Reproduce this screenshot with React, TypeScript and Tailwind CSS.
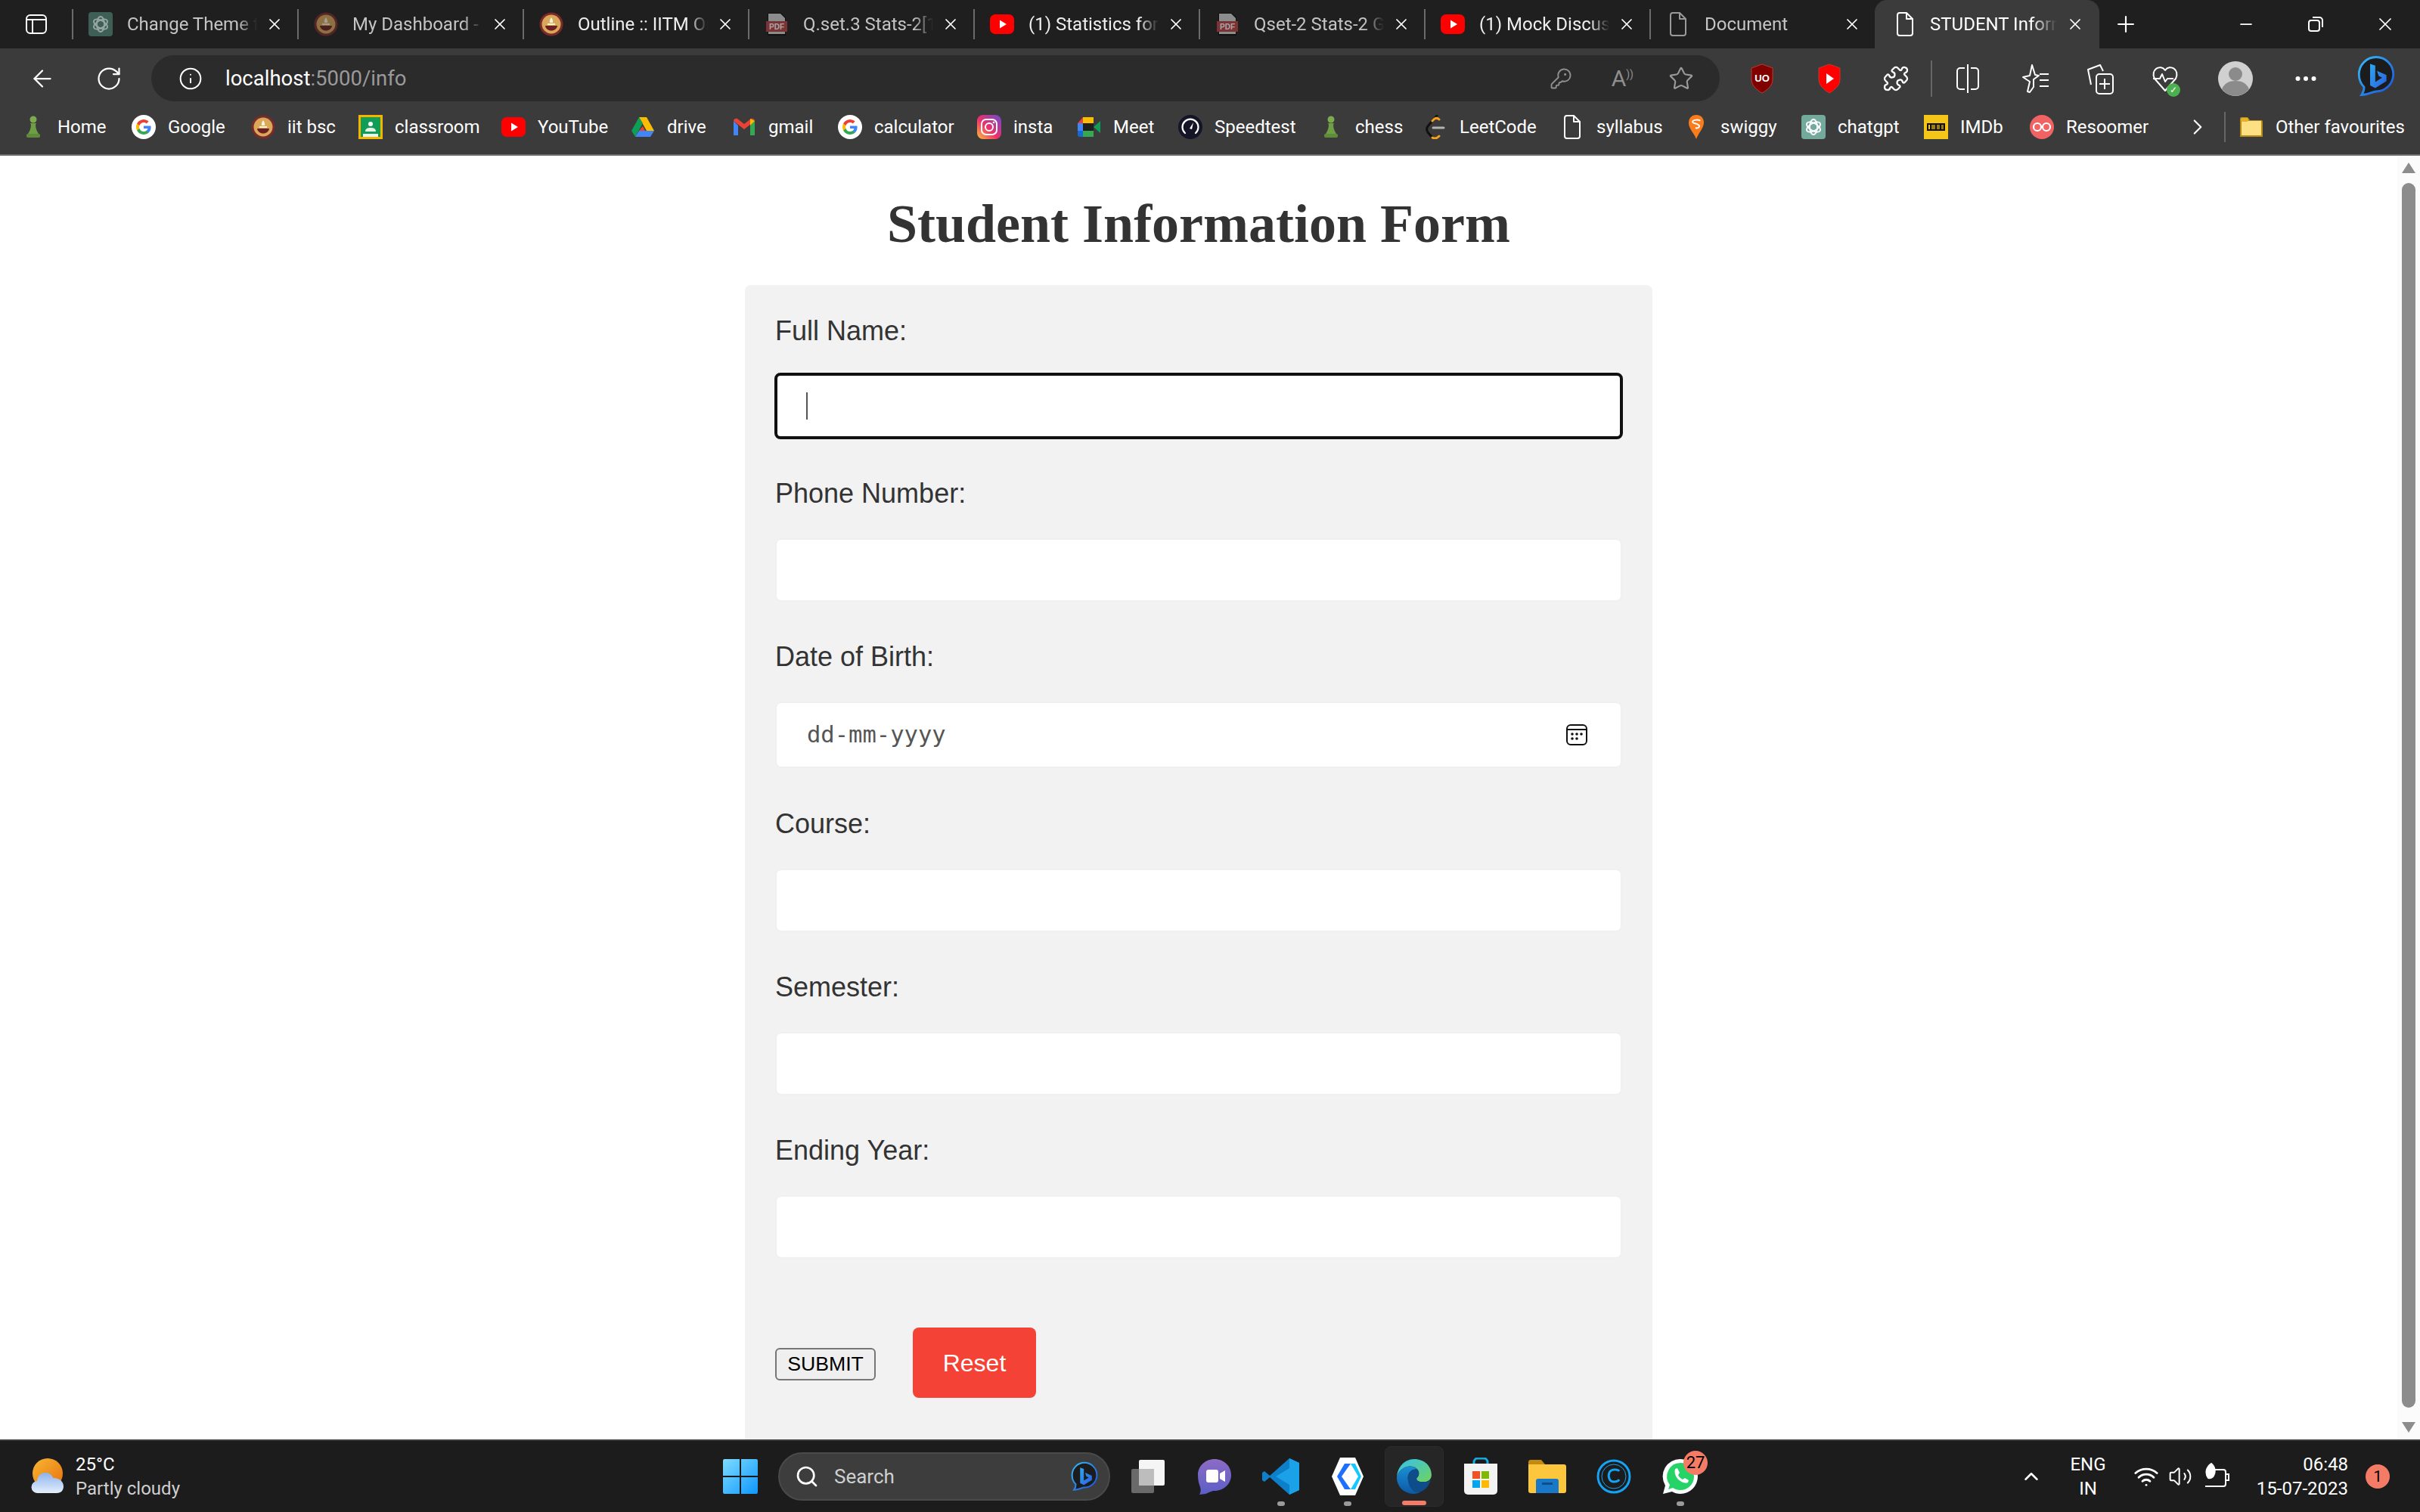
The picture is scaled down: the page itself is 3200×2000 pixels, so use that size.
import React from 'react';
import { ArrowLeft, RotateCw, Info, KeyRound, Star, Puzzle, Plus, Minus, X, ChevronRight, ChevronUp, Search, Wifi, Volume2, MoreHorizontal } from 'lucide-react';

const uiFont = "font-['Roboto','Noto_Sans',sans-serif]";

// ---- logos ----
const Pawn = () => (
  <svg width="32" height="32" viewBox="0 0 32 32">
    <circle cx="16" cy="6" r="4.5" fill="#7cab4f" />
    <path d="M12 11h8l-1 2c0 5 2 9 4 12H9c2-3 4-7 4-12z" fill="#6f9e45" />
    <rect x="7" y="25" width="18" height="5" rx="2" fill="#5f8c3a" />
  </svg>
);
const GoogleG = () => (
  <svg width="32" height="32" viewBox="0 0 32 32">
    <circle cx="16" cy="16" r="16" fill="#fff" />
    <path d="M25.6 16.3c0-.7-.1-1.3-.2-1.9H16v3.7h5.4a4.6 4.6 0 0 1-2 3v2.5h3.2c1.9-1.7 3-4.300 3-7.300z" fill="#4285f4" />
    <path d="M16 26c2.700 0 5-.9 6.600-2.400l-3.200-2.500c-.9.6-2 1-3.400 1-2.600 0-4.800-1.800-5.600-4.100H7.100v2.600A10 10 0 0 0 16 26z" fill="#34a853" />
    <path d="M10.400 18a6 6 0 0 1 0-3.900v-2.600H7.100a10 10 0 0 0 0 9.100z" fill="#fbbc05" />
    <path d="M16 9.900c1.500 0 2.800.5 3.800 1.500l2.800-2.800A10 10 0 0 0 7.100 11.500l3.300 2.600c.8-2.400 3-4.200 5.600-4.200z" fill="#ea4335" />
  </svg>
);
const Seal = () => (
  <svg width="32" height="32" viewBox="0 0 32 32">
    <circle cx="16" cy="16" r="15.500" fill="#7b2a2a" />
    <circle cx="16" cy="16" r="12.500" fill="#d9a85a" />
    <path d="M8 18h16c-.5 4-4 6.500-8 6.500S8.500 22 8 18z" fill="#6e1f1f" />
    <path d="M16 7c2 3 2.500 5 2 7h-4c-.5-2 0-4 2-7z" fill="#fff3d6" />
    <rect x="11" y="15" width="10" height="2" fill="#fff3d6" />
  </svg>
);
const Classroom = () => (
  <svg width="32" height="32" viewBox="0 0 32 32">
    <rect width="32" height="32" fill="#f4b400" />
    <rect x="3" y="3" width="26" height="26" fill="#0f9d58" />
    <circle cx="16" cy="12" r="3" fill="#fff" />
    <path d="M9 22c0-4 3-5 7-5s7 1 7 5z" fill="#e8f0e8" />
    <rect x="6" y="25" width="20" height="4" fill="#fff" opacity="0.9" />
  </svg>
);
const YouTube = () => (
  <svg width="32" height="32" viewBox="0 0 32 32">
    <rect x="0" y="3" width="32" height="26" rx="7" fill="#ff0000" />
    <path d="M13 10.500 22 16l-9 5.500z" fill="#fff" />
  </svg>
);
const Drive = () => (
  <svg width="32" height="32" viewBox="0 0 32 32">
    <path d="M11 3h10l10 18H21z" fill="#fbbc04" />
    <path d="M11 3 1 21l5 8 10-18z" fill="#0f9d58" />
    <path d="M11 21h20l-5 8H6z" fill="#4285f4" />
    <path d="M11 21h8l-3-6z" fill="#ea4335" />
  </svg>
);
const Gmail = () => (
  <svg width="32" height="32" viewBox="0 0 32 32">
    <path d="M2 8v19h6V14z" fill="#4285f4" />
    <path d="M24 14v13h6V8z" fill="#34a853" />
    <path d="M2 8l14 11L30 8c0-3-3-4-5-3l-9 7-9-7C5 4 2 5 2 8z" fill="#ea4335" />
    <path d="M24 5l6 3-6 6z" fill="#fbbc04" />
  </svg>
);
const Instagram = () => (
  <svg width="32" height="32" viewBox="0 0 32 32">
    <defs>
      <linearGradient id="ig" x1="0" y1="1" x2="1" y2="0">
        <stop offset="0" stopColor="#fdc13a" />
        <stop offset="0.45" stopColor="#ef2f6a" />
        <stop offset="1" stopColor="#6a4bd0" />
      </linearGradient>
    </defs>
    <rect width="32" height="32" rx="8" fill="url(#ig)" />
    <rect x="6" y="6" width="20" height="20" rx="6" fill="none" stroke="#fff" strokeWidth="2" />
    <circle cx="16" cy="16" r="5" fill="none" stroke="#fff" strokeWidth="2" />
    <circle cx="22" cy="10" r="1.300" fill="#fff" />
  </svg>
);
const Meet = () => (
  <svg width="32" height="32" viewBox="0 0 32 32">
    <path d="M8 3h14v8H8z" fill="#fbbc04" />
    <path d="M8 3v8H1z" fill="#ea4335" />
    <path d="M1 11h7v10H1z" fill="#4285f4" />
    <path d="M1 21h7v8H4c-2 0-3-1-3-3z" fill="#1967d2" />
    <path d="M8 21h14v8H8z" fill="#34a853" />
    <path d="M8 11h14v10H8z" fill="#1f1f1f" />
    <path d="M22 16l9-8v16z" fill="#0f9d58" />
  </svg>
);
const Speedtest = () => (
  <svg width="32" height="32" viewBox="0 0 32 32">
    <circle cx="16" cy="16" r="16" fill="#141526" />
    <path d="M9 24a10.500 10.500 0 1 1 14 0" fill="none" stroke="#fff" strokeWidth="2.200" strokeLinecap="round" />
    <path d="M15 18l5-8-2 9z" fill="#fff" />
  </svg>
);
const LeetCode = () => (
  <svg width="32" height="32" viewBox="0 0 32 32">
    <path d="M18 1 6 15c-2 3-2 5 0 8l6 7" fill="none" stroke="#111" strokeWidth="3" strokeLinecap="round" />
    <path d="M12 30c3 2 6 1 9-2M12 8l3-3c2-1 4-1 6 1" fill="none" stroke="#f89f1b" strokeWidth="3" strokeLinecap="round" />
    <path d="M13 17h14" stroke="#b3b3b3" strokeWidth="3" strokeLinecap="round" />
  </svg>
);
const FileIcon = ({ color = '#fff' }: { color?: string }) => (
  <svg width="32" height="32" viewBox="0 0 32 32" fill="none" stroke={color} strokeWidth="2" strokeLinejoin="round">
    <path d="M6 4a3 3 0 0 1 3-3h9l8 8v19a3 3 0 0 1-3 3H9a3 3 0 0 1-3-3z" />
    <path d="M18 1v8h8" />
  </svg>
);
const Swiggy = () => (
  <svg width="32" height="32" viewBox="0 0 32 32">
    <path d="M16 0c6 0 10 4 10 10 0 7-7 14-10 22-3-8-10-14-10-21C6 4 10 0 16 0z" fill="#f97d1c" />
    <path d="M11 9c1-3 9-3 10-1M11 9c0 3 9 2 9 6 0 2-3 3-5 2" fill="none" stroke="#fff" strokeWidth="2" />
  </svg>
);
const ChatGpt = ({ dim }: { dim?: boolean }) => (
  <svg width="32" height="32" viewBox="0 0 32 32">
    <rect width="32" height="32" rx="4" fill={dim ? '#3e5f56' : '#74aa9c'} />
    <g fill="none" stroke={dim ? '#98a8a3' : '#fff'} strokeWidth="1.800">
      <ellipse cx="16" cy="16" rx="5" ry="10" />
      <ellipse cx="16" cy="16" rx="5" ry="10" transform="rotate(60 16 16)" />
      <ellipse cx="16" cy="16" rx="5" ry="10" transform="rotate(120 16 16)" />
    </g>
  </svg>
);
const Imdb = () => (
  <svg width="32" height="32" viewBox="0 0 32 32">
    <rect width="32" height="32" fill="#f5c518" />
    <rect x="4" y="11" width="24" height="10" fill="#111" />
    <rect x="6" y="13" width="2" height="6" fill="#f5c518" />
    <rect x="10" y="13" width="5" height="6" fill="#f5c518" opacity="0.6" />
    <rect x="17" y="13" width="4" height="6" fill="#f5c518" opacity="0.6" />
    <rect x="23" y="13" width="3" height="6" fill="#f5c518" opacity="0.6" />
  </svg>
);
const Resoomer = () => (
  <svg width="32" height="32" viewBox="0 0 32 32">
    <circle cx="16" cy="16" r="16" fill="#ef6363" />
    <circle cx="10" cy="16" r="5" fill="none" stroke="#fff" strokeWidth="2.200" />
    <circle cx="22" cy="16" r="5" fill="none" stroke="#fff" strokeWidth="2.200" />
  </svg>
);
const Folder = () => (
  <svg width="32" height="32" viewBox="0 0 32 32">
    <path d="M1 5a2 2 0 0 1 2-2h8l3 4h15a2 2 0 0 1 2 2v20H1z" fill="#b88a18" />
    <path d="M3 8h26v19H3z" fill="#fde082" />
    <rect x="2" y="4" width="10" height="5" rx="2" fill="#e5b12a" />
  </svg>
);
const PdfIcon = () => (
  <svg width="32" height="32" viewBox="0 0 32 32">
    <path d="M4 1h18l6 6v24H4z" fill="#111" />
    <path d="M5 2h16l6 6v21H5z" fill="#8c8c8c" />
    <rect x="2" y="12" width="28" height="14" fill="#7c3333" />
    <text x="16" y="23" textAnchor="middle" fontSize="10" fontWeight="700" fill="#a9a9a9" fontFamily="Liberation Sans, sans-serif">PDF</text>
  </svg>
);
const EdgeMark = ({ size = 32 }: { size?: number }) => (
  <svg width={size} height={size} viewBox="0 0 48 48">
    <defs>
      <linearGradient id="edgeA" x1="0" y1="0" x2="1" y2="1">
        <stop offset="0" stopColor="#35c1f1" />
        <stop offset="1" stopColor="#6fd35b" />
      </linearGradient>
      <linearGradient id="edgeB" x1="0" y1="0" x2="0" y2="1">
        <stop offset="0" stopColor="#1c8fd6" />
        <stop offset="1" stopColor="#0c59a4" />
      </linearGradient>
    </defs>
    <path d="M24 2c13 0 22 9 22 20 0 6-5 9-10 9-4 0-9-1-9-4 0-2 3-2 3-7 0-5-5-9-11-9-8 0-15 6-17 13C3 13 11 2 24 2z" fill="url(#edgeA)" />
    <path d="M2 24c2-7 9-13 17-13 4 0 7 2 9 4-7-1-12 4-12 11 0 8 6 16 16 18-3 1-5 2-9 2C11 46 1 36 2 24z" fill="url(#edgeB)" />
    <path d="M16 26c0-7 5-12 12-11 2 2 2 3 2 5 0 5-3 5-3 7 0 3 5 4 9 4 4 0 7-1 9-3-2 9-10 17-19 16C20 42 16 34 16 26z" fill="#0e4c8a" />
  </svg>
);
const BingMark = ({ size = 40 }: { size?: number }) => (
  <svg width={size} height={size * 1.1} viewBox="0 0 44 48">
    <defs>
      <linearGradient id="bingRing" x1="0" y1="0" x2="1" y2="1">
        <stop offset="0" stopColor="#37bdf8" />
        <stop offset="1" stopColor="#1b4fd8" />
      </linearGradient>
      <linearGradient id="bingB" x1="0" y1="0" x2="1" y2="1">
        <stop offset="0" stopColor="#2ea8ef" />
        <stop offset="1" stopColor="#2a5fe0" />
      </linearGradient>
    </defs>
    <path d="M22 2c11 0 20 9 20 20s-9 20-20 20c-4 0-9 4-17 4 3-4 3-7 3-9-4-4-6-9-6-15C2 11 11 2 22 2z" fill="#1c1c1c" stroke="url(#bingRing)" strokeWidth="2.500" />
    <path d="M15 10l6 2v19l8-5-4-2-2-6 11 5v7l-13 8-6-3z" fill="url(#bingB)" />
  </svg>
);
const Shield = ({ fill, children }: { fill: string; children: React.ReactNode }) => (
  <svg width="32" height="40" viewBox="0 0 32 40">
    <path d="M16 1 30 6v15c0 8-7 14-14 18C9 35 2 29 2 21V6z" fill={fill} stroke="#c0392b" strokeWidth="1" />
    {children}
  </svg>
);

// ---- data ----
const tabs = [
  { title: 'Change Theme for', icon: <ChatGpt dim />, tone: 'text-[#c4c4c4]' },
  { title: 'My Dashboard - IITM', icon: <span className="opacity-60"><Seal /></span>, tone: 'text-[#c4c4c4]' },
  { title: 'Outline :: IITM Online', icon: <Seal />, tone: 'text-[#eeeeee]' },
  { title: 'Q.set.3 Stats-2[1]', icon: <PdfIcon />, tone: 'text-[#c4c4c4]' },
  { title: '(1) Statistics for Data', icon: <YouTube />, tone: 'text-[#eeeeee]' },
  { title: 'Qset-2 Stats-2 Graded', icon: <PdfIcon />, tone: 'text-[#c4c4c4]' },
  { title: '(1) Mock Discussion', icon: <YouTube />, tone: 'text-[#eeeeee]' },
  { title: 'Document', icon: <FileIcon color="#9a9a9a" />, tone: 'text-[#c4c4c4]' },
];

const bookmarks = [
  { label: 'Home', w: 'w-[146px]', icon: <Pawn /> },
  { label: 'Google', w: 'w-[158px]', icon: <GoogleG /> },
  { label: 'iit bsc', w: 'w-[142px]', icon: <Seal /> },
  { label: 'classroom', w: 'w-[189px]', icon: <Classroom /> },
  { label: 'YouTube', w: 'w-[171px]', icon: <YouTube /> },
  { label: 'drive', w: 'w-[134px]', icon: <Drive /> },
  { label: 'gmail', w: 'w-[140px]', icon: <Gmail /> },
  { label: 'calculator', w: 'w-[184px]', icon: <GoogleG /> },
  { label: 'insta', w: 'w-[132px]', icon: <Instagram /> },
  { label: 'Meet', w: 'w-[134px]', icon: <Meet /> },
  { label: 'Speedtest', w: 'w-[186px]', icon: <Speedtest /> },
  { label: 'chess', w: 'w-[138px]', icon: <Pawn /> },
  { label: 'LeetCode', w: 'w-[181px]', icon: <LeetCode /> },
  { label: 'syllabus', w: 'w-[164px]', icon: <FileIcon /> },
  { label: 'swiggy', w: 'w-[155px]', icon: <Swiggy /> },
  { label: 'chatgpt', w: 'w-[162px]', icon: <ChatGpt /> },
  { label: 'IMDb', w: 'w-[140px]', icon: <Imdb /> },
  { label: 'Resoomer', w: 'w-[222px]', icon: <Resoomer /> },
];

const lowerFields = ['Course:', 'Semester:', 'Ending Year:'];

const fieldInput = 'mt-[39px] block w-full h-[84px] rounded-lg border-2 border-[#f0f0f0] bg-white';

// ---- browser chrome ----
const TabBar = () => (
  <div className={`flex h-[64px] items-center bg-[#1f1f1f] ${uiFont}`}>
    <div className="flex w-[95px] shrink-0 justify-center">
      <svg width="30" height="30" viewBox="0 0 30 30" fill="none" stroke="#fff" strokeWidth="2">
        <rect x="2" y="3" width="26" height="24" rx="5" />
        <path d="M2 9h26M10 9v18" />
      </svg>
    </div>
    {tabs.map((tab) => (
      <div key={tab.title} className="flex h-[64px] w-[298px] shrink-0 items-center">
        <div className="h-[40px] w-[2px] bg-[#6a6a6a]" />
        <div className="ml-[20px] w-[32px] shrink-0">{tab.icon}</div>
        <div className={`ml-[19px] w-[172px] overflow-hidden whitespace-nowrap text-[24px] [mask-image:linear-gradient(to_right,black_85%,transparent)] ${tab.tone}`}>
          {tab.title}
        </div>
        <X className="ml-[11px] shrink-0 text-white" size={24} strokeWidth={1.75} />
      </div>
    ))}
    <div className="flex h-[64px] w-[297px] shrink-0 items-center rounded-t-[16px] bg-[#3b3b3b] pl-[24px]">
      <FileIcon />
      <div className="ml-[17px] w-[168px] overflow-hidden whitespace-nowrap text-[24px] text-white [mask-image:linear-gradient(to_right,black_80%,transparent)]">
        STUDENT Information
      </div>
      <X className="ml-[12px] shrink-0 text-white" size={24} strokeWidth={1.75} />
    </div>
    <Plus className="ml-[18px] shrink-0 text-white" size={34} strokeWidth={1.5} />
    <Minus className="ml-[130px] shrink-0 text-white" size={24} strokeWidth={1.75} />
    <svg className="ml-[68px] shrink-0" width="24" height="24" viewBox="0 0 24 24" fill="none" stroke="#fff" strokeWidth="2">
      <rect x="3" y="7" width="14" height="14" rx="3" />
      <path d="M8 3h9a4 4 0 0 1 4 4v9" />
    </svg>
    <X className="ml-[66px] shrink-0 text-white" size={28} strokeWidth={1.5} />
  </div>
);

const Toolbar = () => (
  <div className={`flex h-[70px] items-start bg-[#3b3b3b] pl-[38px] pt-[9px] ${uiFont}`}>
    <ArrowLeft className="mt-[13px] text-white" size={36} strokeWidth={1.5} />
    <RotateCw className="ml-[52px] mt-[13px] text-white" size={36} strokeWidth={1.5} />
    <div className="ml-[38px] flex h-[61px] w-[2074px] shrink-0 items-center rounded-[31px] bg-[#2b2b2b] pl-[36px]">
      <Info className="text-white" size={32} strokeWidth={1.5} />
      <div className="ml-[30px] text-[27.5px]">
        <span className="text-white">localhost</span>
        <span className="text-[#9a9a9a]">:5000/info</span>
      </div>
      <KeyRound className="ml-auto text-[#8f8f8f]" size={30} strokeWidth={1.5} />
      <div className="ml-[52px] text-[30px] leading-none text-[#8f8f8f]">A<span className="align-super text-[14px]">))</span></div>
      <Star className="ml-[46px] mr-[34px] text-[#9a9a9a]" size={34} strokeWidth={1.5} />
    </div>
    <div className="ml-[40px] mt-[6px] flex items-center">
      <Shield fill="#800000">
        <text x="16" y="24" textAnchor="middle" fontSize="13" fontWeight="700" fill="#fff" fontFamily="Liberation Sans, sans-serif">UO</text>
      </Shield>
      <div className="ml-[57px]">
        <Shield fill="#ff0000"><path d="M12 13l10 7-10 7z" fill="#fff" /></Shield>
      </div>
      <Puzzle className="ml-[54px] text-white" size={36} strokeWidth={1.5} />
      <div className="ml-[28px] h-[48px] w-[2px] bg-[#666666]" />
      <svg className="ml-[30px]" width="34" height="40" viewBox="0 0 34 40" fill="none" stroke="#fff" strokeWidth="2">
        <path d="M17 1v38M13 6H7a4 4 0 0 0-4 4v20a4 4 0 0 0 4 4h6M21 6h6a4 4 0 0 1 4 4v20a4 4 0 0 1-4 4h-6" />
      </svg>
      <svg className="ml-[54px]" width="36" height="40" viewBox="0 0 36 40" fill="none" stroke="#fff" strokeWidth="2" strokeLinejoin="round">
        <path d="M14 2l4 13 5 1-7 5v10l-5 7-3-1 3-13-9-6 9-2z" />
        <path d="M24 14h12M24 22h12M24 30h12" />
      </svg>
      <svg className="ml-[50px]" width="36" height="44" viewBox="0 0 36 44" fill="none" stroke="#fff" strokeWidth="2" strokeLinejoin="round">
        <path d="M6 30 2 10l16-6 4 8" />
        <rect x="13" y="16" width="22" height="26" rx="4" />
        <path d="M24 22v14M17 29h14" />
      </svg>
      <div className="relative ml-[50px]">
        <svg width="36" height="40" viewBox="0 0 36 40" fill="none" stroke="#fff" strokeWidth="2" strokeLinejoin="round">
          <path d="M4 20C-2 8 12 0 18 9c6-9 20-1 14 11L18 36z" />
          <path d="M2 20h9l3-6 4 10 3-4h8" />
        </svg>
        <div className="absolute -bottom-[4px] -right-[2px] flex h-[18px] w-[18px] items-center justify-center rounded-full bg-[#4caf50] text-[12px] leading-none text-white">✓</div>
      </div>
      <svg className="ml-[52px]" width="46" height="46" viewBox="0 0 46 46">
        <circle cx="23" cy="23" r="23" fill="#d0d0d0" />
        <circle cx="23" cy="17" r="9" fill="#8b8b8b" />
        <path d="M5 37c3-8 10-11 18-11s15 3 18 11a23 23 0 0 1-36 0z" fill="#8b8b8b" />
      </svg>
      <MoreHorizontal className="ml-[52px] text-white" size={36} strokeWidth={2} />
      <div className="-mt-[6px] ml-[50px]">
        <BingMark size={50} />
      </div>
    </div>
  </div>
);

const BookmarkBar = () => (
  <div className={`flex h-[72px] items-center border-b-2 border-[#6e6e6e] bg-[#3b3b3b] pb-[3px] pl-[28px] text-[24px] text-white ${uiFont}`}>
    {bookmarks.map((item) => (
      <div key={item.label} className={`flex shrink-0 items-center gap-[16px] ${item.w}`}>
        <div className="h-[32px] w-[32px] shrink-0">{item.icon}</div>
        <span className="whitespace-nowrap">{item.label}</span>
      </div>
    ))}
    <ChevronRight className="-ml-[17px] text-white" size={34} strokeWidth={1.5} />
    <div className="ml-[18px] h-[40px] w-[2px] bg-[#666666]" />
    <div className="ml-[18px] flex items-center gap-[16px]">
      <Folder />
      <span className="whitespace-nowrap">Other favourites</span>
    </div>
  </div>
);

const Scrollbar = () => (
  <div className="flex w-[30px] shrink-0 flex-col items-center bg-[#fbfbfb] pt-[9px]">
    <div className="h-0 w-0 border-x-[9px] border-b-[14px] border-x-transparent border-b-[#8c8c8c]" />
    <div className="mt-[13px] h-[1620px] w-[18px] shrink-0 rounded-full bg-[#8c8c8c]" />
    <div className="mt-auto mb-[9px] h-0 w-0 border-x-[9px] border-t-[14px] border-x-transparent border-t-[#8c8c8c]" />
  </div>
);

// ---- page ----
const StudentForm = () => (
  <div className="min-w-0 flex-1 overflow-hidden bg-white font-['Liberation_Sans',Arial,sans-serif]">
    <h1 className="mt-[47px] h-[87px] text-center font-['Liberation_Serif',serif] text-[72px] font-bold leading-[87px] text-[#333333]">
      Student Information Form
    </h1>
    <form className="mx-auto mt-[37px] w-[1200px] rounded-lg bg-[#f2f2f2] px-[40px] pt-[41px] text-[36px] leading-[40px] text-[#333333]">
      <label className="block h-[40px]">Full Name:</label>
      <div className="mt-[35px] -mx-[1px] flex h-[88px] items-center rounded-lg border-[4px] border-[#101010] bg-white pl-[38px]">
        <div className="h-[36px] w-[2px] bg-[#555555]" />
      </div>
      <label className="mt-[52px] block h-[40px]">Phone Number:</label>
      <input type="text" aria-label="Phone Number" className={fieldInput} />
      <label className="mt-[53px] block h-[40px]">Date of Birth:</label>
      <div className="mt-[39px] flex h-[88px] items-center justify-between rounded-lg border-2 border-[#f0f0f0] bg-white pl-[40px] pr-[44px]">
        <span className="font-['DejaVu_Sans_Mono',monospace] text-[30.5px] text-[#555555]">dd-mm-yyyy</span>
        <svg width="28" height="28" viewBox="0 0 28 28" fill="none" stroke="#111" strokeWidth="2">
          <rect x="1" y="1" width="26" height="26" rx="5" />
          <path d="M1 7h26" />
          <g fill="#111" stroke="none">
            <circle cx="8" cy="13" r="1.800" />
            <circle cx="14" cy="13" r="1.800" />
            <circle cx="20" cy="13" r="1.800" />
            <circle cx="8" cy="19" r="1.800" />
            <circle cx="14" cy="19" r="1.800" />
          </g>
        </svg>
      </div>
      <div className="mt-[54px] flex flex-col gap-[53px]">
        {lowerFields.map((name) => (
          <div key={name}>
            <label className="block h-[40px]">{name}</label>
            <input type="text" aria-label={name} className={fieldInput} />
          </div>
        ))}
      </div>
      <div className="mt-[91px] flex items-center gap-[49px] pb-[80px]">
        <button type="button" className="mt-[4px] h-[43px] w-[133px] rounded-[6px] border-2 border-[#767676] bg-[#efefef] text-[26.67px] leading-none text-black">
          SUBMIT
        </button>
        <button type="button" className="h-[93px] w-[163px] rounded-lg bg-[#f44336] text-[32px] text-white">
          Reset
        </button>
      </div>
    </form>
  </div>
);

// ---- taskbar ----
const TaskIcon = ({ children, dot, className = 'w-[88px]' }: { children: React.ReactNode; dot?: boolean; className?: string }) => (
  <div className={`relative flex h-[80px] shrink-0 items-center justify-center ${className}`}>
    {children}
    {dot && <div className="absolute bottom-[1px] left-1/2 h-[6px] w-[10px] -translate-x-1/2 rounded-full bg-[#9a9a9a]" />}
  </div>
);

const Taskbar = () => (
  <div className={`flex h-[96px] shrink-0 items-center border-t-2 border-[#3b3b3b] bg-[#1c1c1c] pl-[40px] text-[24px] text-white ${uiFont}`}>
    <svg width="48" height="48" viewBox="0 0 48 48">
      <defs>
        <linearGradient id="sun" x1="0" y1="0" x2="1" y2="1">
          <stop offset="0" stopColor="#f7b733" />
          <stop offset="1" stopColor="#e8700f" />
        </linearGradient>
        <linearGradient id="cloud" x1="0" y1="0" x2="0" y2="1">
          <stop offset="0" stopColor="#8eb2ee" />
          <stop offset="1" stopColor="#e4effb" />
        </linearGradient>
      </defs>
      <circle cx="23" cy="20" r="20" fill="url(#sun)" />
      <path d="M10 46a8 8 0 0 1-1-16c1-7 5-11 11-11 5 0 9 3 10 7h1c8 0 13 5 13 11 0 5-3 9-9 9z" fill="url(#cloud)" />
    </svg>
    <div className="ml-[12px] w-[856px] shrink-0 leading-[32px]">
      <div>25°C</div>
      <div className="text-[#cfcfcf]">Partly cloudy</div>
    </div>
    <svg width="46" height="46" viewBox="0 0 46 46">
      <defs>
        <linearGradient id="win" x1="0" y1="0" x2="1" y2="1">
          <stop offset="0" stopColor="#7fdcff" />
          <stop offset="1" stopColor="#0f97ff" />
        </linearGradient>
      </defs>
      <path d="M0 2a2 2 0 0 1 2-2h20v22H0zM24 0h20a2 2 0 0 1 2 2v20H24zM0 24h22v22H2a2 2 0 0 1-2-2zM24 24h22v20a2 2 0 0 1-2 2H24z" fill="url(#win)" />
    </svg>
    <div className="ml-[27px] flex h-[64px] w-[439px] shrink-0 items-center rounded-[32px] border-2 border-[#4a4a4a] bg-[#3d3d3d] pl-[20px] pr-[14px]">
      <Search className="text-white" size={32} strokeWidth={2} />
      <span className="ml-[20px] text-[26px] text-[#cfcfcf]">Search</span>
      <div className="ml-auto"><BingMark size={36} /></div>
    </div>
    <div className="ml-[6px] flex items-center">
      <TaskIcon>
        <svg width="48" height="48" viewBox="0 0 48 48">
          <rect x="2" y="14" width="30" height="32" rx="2" fill="#6a6a6a" />
          <rect x="12" y="2" width="34" height="34" rx="2" fill="#f5f5f5" />
          <rect x="12" y="14" width="20" height="22" fill="#bdbdbd" />
        </svg>
      </TaskIcon>
      <TaskIcon>
        <svg width="48" height="50" viewBox="0 0 48 50">
          <defs>
            <linearGradient id="chatApp" x1="0" y1="0" x2="0" y2="1">
              <stop offset="0" stopColor="#8d6bc4" />
              <stop offset="1" stopColor="#5b5fc7" />
            </linearGradient>
          </defs>
          <path d="M24 2c12 0 22 9 22 21s-10 21-22 21c-4 0-6 2-12 4l-8 1c2-3 2-7 1-10-2-5-3-10-3-16C2 11 12 2 24 2z" fill="url(#chatApp)" />
          <rect x="13" y="16" width="16" height="17" rx="3" fill="#fff" />
          <path d="M31 21l7-4v15l-7-4z" fill="#fff" />
        </svg>
      </TaskIcon>
      <TaskIcon dot>
        <svg width="50" height="50" viewBox="0 0 50 50">
          <path d="M36 1 49 7v36l-13 6L10 26l-7 6-3-2v-10l3-2 7 6z" fill="#0e7fc9" />
          <path d="M36 1 49 7v36l-13 6V14L18 25l18 11z" fill="#1ba1e8" />
        </svg>
      </TaskIcon>
      <TaskIcon dot>
        <svg width="44" height="52" viewBox="0 0 44 52">
          <path d="M12 1h20l11 25-11 25H12L1 26z" fill="#fff" />
          <path d="M18 9h8L14 26l12 17h-8L8 26z" fill="#1f6fff" />
          <path d="M26 9h6l8 17-8 17h-6l10-17z" fill="#17c7ff" />
        </svg>
      </TaskIcon>
      <TaskIcon className="mx-[5px] w-[78px] rounded-lg border border-[#2c2c2c] bg-[#262626]">
        <EdgeMark size={50} />
        <div className="absolute bottom-[1px] left-1/2 h-[6px] w-[32px] -translate-x-1/2 rounded-full bg-[#f47c66]" />
      </TaskIcon>
      <TaskIcon>
        <svg width="46" height="50" viewBox="0 0 46 50">
          <path d="M14 14V6a5 5 0 0 1 5-5h8a5 5 0 0 1 5 5v8" fill="none" stroke="#19a7e0" strokeWidth="3" />
          <path d="M1 8h44v36a5 5 0 0 1-5 5H6a5 5 0 0 1-5-5z" fill="#f3f3f3" />
          <rect x="12" y="18" width="10" height="10" fill="#f25022" />
          <rect x="24" y="18" width="10" height="10" fill="#7fba00" />
          <rect x="12" y="30" width="10" height="10" fill="#00a4ef" />
          <rect x="24" y="30" width="10" height="10" fill="#ffb900" />
        </svg>
      </TaskIcon>
      <TaskIcon>
        <svg width="50" height="44" viewBox="0 0 50 44">
          <path d="M0 3a3 3 0 0 1 3-3h14l5 6h-22z" fill="#c48a10" />
          <path d="M0 6h47a3 3 0 0 1 3 3v32a3 3 0 0 1-3 3H3a3 3 0 0 1-3-3z" fill="#fcc63d" />
          <path d="M10 44V28a3 3 0 0 1 3-3h24a3 3 0 0 1 3 3v16z" fill="#1a78c9" />
          <rect x="18" y="30" width="14" height="3" fill="#0c4f8a" />
        </svg>
      </TaskIcon>
      <TaskIcon>
        <svg width="46" height="46" viewBox="0 0 46 46" fill="none" stroke="#14a3f5" strokeWidth="3">
          <circle cx="23" cy="23" r="21" />
          <circle cx="23" cy="23" r="16" strokeWidth="1" />
          <path d="M30 16c-2-3-11-3-13 2s0 12 6 12c3 0 6-1 7-3" />
        </svg>
      </TaskIcon>
      <TaskIcon dot>
        <svg width="50" height="50" viewBox="0 0 50 50">
          <path d="M25 2a23 23 0 0 1 0 46c-4 0-8-1-11-3L2 48l3-11a23 23 0 0 1 20-35z" fill="#fff" />
          <path d="M25 7a18 18 0 0 1 0 36c-4 0-7-1-10-3l-6 2 2-6a18 18 0 0 1 14-29z" fill="#25d366" />
          <path d="M18 15l3-1 3 6-2 3c1 3 4 5 6 6l3-2 5 3-1 3c-6 3-20-6-17-18z" fill="#fff" />
        </svg>
        <div className="absolute right-[8px] top-[6px] flex h-[32px] w-[32px] items-center justify-center rounded-full bg-[#f47c66] text-[22px] leading-none text-black">
          27
        </div>
      </TaskIcon>
    </div>
    <ChevronUp className="ml-[405px] shrink-0 text-white" size={30} strokeWidth={2} />
    <div className="ml-[30px] w-[60px] shrink-0 text-center leading-[32px]">
      <div>ENG</div>
      <div>IN</div>
    </div>
    <Wifi className="ml-[30px] shrink-0 text-white" size={34} strokeWidth={2} />
    <Volume2 className="ml-[12px] shrink-0 text-white" size={32} strokeWidth={1.5} />
    <svg className="ml-[13px] shrink-0" width="36" height="36" viewBox="0 0 36 36" fill="none" stroke="#fff" strokeWidth="2">
      <path d="M12 1c5 4 6 11 3 16-1 2-4 4-7 3C3 13 6 5 12 1z" fill="#fff" />
      <path d="M14 9h14a3 3 0 0 1 3 3v16a3 3 0 0 1-3 3H4M31 15h4v8h-4" />
    </svg>
    <div className="ml-[auto] w-[140px] shrink-0 text-right leading-[32px]">
      <div>06:48</div>
      <div>15-07-2023</div>
    </div>
    <div className="ml-[23px] mr-[40px] flex h-[32px] w-[32px] shrink-0 items-center justify-center rounded-full bg-[#f47c66] text-[20px] leading-none text-black">
      1
    </div>
  </div>
);

export default function App() {
  return (
    <div className="flex h-[2000px] w-[3200px] flex-col overflow-hidden bg-white">
      <TabBar />
      <Toolbar />
      <BookmarkBar />
      <div className="flex min-h-0 flex-1 overflow-hidden">
        <StudentForm />
        <Scrollbar />
      </div>
      <Taskbar />
    </div>
  );
}
